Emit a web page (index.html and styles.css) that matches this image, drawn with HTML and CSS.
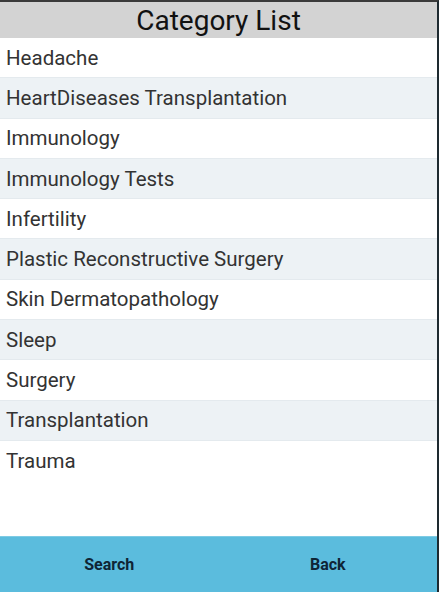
FILE: index.html
```html
<!DOCTYPE html>
<html lang="en">

<head>
    <meta charset="UTF-8">
    <meta name="viewport" content="width=device-width, initial-scale=1.0">
    <title>Category List</title>
    <link rel="stylesheet" href="styles.css">
</head>

<body>
    <div class="screen">
        <div class="header">Category List</div>

        <ul class="category-list">
            <li>Headache</li>
            <li>HeartDiseases Transplantation</li>
            <li>Immunology</li>
            <li>Immunology Tests</li>
            <li>Infertility</li>
            <li>Plastic Reconstructive Surgery</li>
            <li>Skin Dermatopathology</li>
            <li>Sleep</li>
            <li>Surgery</li>
            <li>Transplantation</li>
            <li>Trauma</li>
        </ul>

        <div class="footer">
            <a href="#" class="footer-btn">Search</a>
            <a href="#" class="footer-btn">Back</a>
        </div>
    </div>
</body>

</html>
```

FILE: styles.css
```css
html,
body {
    margin: 0;
    padding: 0;
    height: 100%;
}

body {
    font-family: Roboto, "Noto Sans", sans-serif;
    background-color: #fff;
}

.screen {
    height: 100%;
    box-sizing: border-box;
    border-top: 2px solid #3a3a3a;
    border-right: 2px solid #1e2a30;
    display: flex;
    flex-direction: column;
}

.header {
    height: 36px;
    background-color: #d3d3d3;
    color: #111;
    font-size: 28px;
    line-height: 38px;
    text-align: center;
}

.category-list {
    flex: 1;
    list-style: none;
    margin: 0;
    padding: 0;
}

.category-list li {
    height: 40.3px;
    box-sizing: border-box;
    padding-left: 6px;
    display: flex;
    align-items: center;
    font-size: 20.5px;
    color: #333;
    border-bottom: 1px solid #e4eaee;
}

.category-list li:nth-child(even) {
    background-color: #edf2f5;
}

.category-list li:last-child {
    border-bottom: none;
}

.footer {
    height: 55px;
    background-color: #5bbcdd;
    border-top: 1px solid #7ecbe4;
    display: flex;
}

.footer-btn {
    flex: 1;
    display: flex;
    align-items: center;
    justify-content: center;
    font-size: 16px;
    font-weight: bold;
    color: #0f2535;
    text-decoration: none;
}
```
